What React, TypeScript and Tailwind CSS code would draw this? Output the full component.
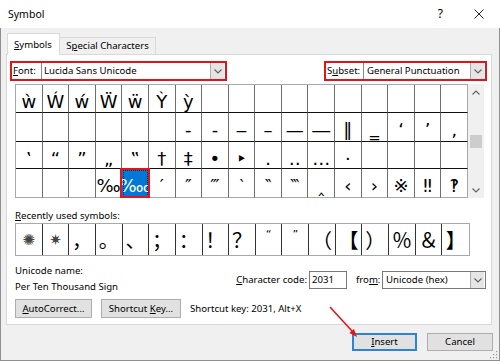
import React from "react";

const GRID: string[][] = [
  ["ẁ", "Ẃ", "ẃ", "Ẅ", "ẅ", "Ỳ", "ỳ", "", "", "", "", "", "", "", "", "", ""],
  ["", "", "", "", "", "", "‐", "‑", "‒", "–", "—", "―", "‖", "‗", "‘", "’", "‚"],
  ["‛", "“", "”", "„", "‟", "†", "‡", "•", "‣", "․", "‥", "…", "‧", "", "", "", ""],
  ["", "", "", "‰", "‱", "′", "″", "‴", "‵", "‶", "‷", "‸", "‹", "›", "※", "‼", "‽"],
];

// row heights taken from the screenshot, written out so tailwind picks them up
const ROW_H = ["h-[28px]", "h-[29px]", "h-[27px]", "h-[29px]"];

const RECENT = ["✺", "✷", "，", "。", "、", "；", "：", "！", "？", "“", "”", "（", "【", "）", "％", "＆", "】"];

function recentFont(i: number) {
  if (i < 2) return "font-['DejaVu_Sans',sans-serif] text-[15px] text-[#444]";
  if (i === 9 || i === 10) return "font-['DejaVu_Sans',sans-serif] text-[11px] leading-none pb-[10px]";
  return "font-['Noto_Sans_CJK_SC',sans-serif] text-[20px] leading-none";
}

function Chevron({ up = false }: { up?: boolean }) {
  return (
    <svg width="8" height="5" viewBox="0 0 8 5">
      <path
        d={up ? "M0.5 4.5 L4 1 L7.5 4.5" : "M0.5 0.5 L4 4 L7.5 0.5"}
        stroke="#606060"
        strokeWidth="1.1"
        fill="none"
      />
    </svg>
  );
}

function DropButton() {
  return (
    <div className="w-[14px] h-full mr-[1px] bg-[#e5e5e5] border-l border-[#adadad] flex items-center justify-center">
      <Chevron />
    </div>
  );
}

function Btn({ children, className = "" }: { children: React.ReactNode; className?: string }) {
  return (
    <div
      className={
        "h-[19px] bg-[#e1e1e1] border border-[#adadad] flex items-center justify-center " + className
      }
    >
      {children}
    </div>
  );
}

export default function App() {
  return (
    <div className="relative w-[500px] h-[361px] flex flex-col bg-white text-black font-['Noto_Sans',sans-serif] text-[9.6px] leading-[12px] overflow-hidden">
      {/* title bar */}
      <div className="h-[28px] flex items-center pl-[8px] bg-white shrink-0">
        <span className="text-[10.5px]">Symbol</span>
        <div className="ml-auto flex items-center">
          <span className="text-[12px] leading-none">?</span>
          <svg width="10" height="10" viewBox="0 0 10 10" className="ml-[31px] mr-[16px]">
            <path d="M0.5 0.5 L9.5 9.5 M9.5 0.5 L0.5 9.5" stroke="#222" strokeWidth="1" />
          </svg>
        </div>
      </div>

      {/* body */}
      <div className="flex-1 bg-[#f0f0f0] border-l border-r border-b border-[#8f8f8f] px-[5px] pt-[5px] flex flex-col">
        {/* tabs */}
        <div className="flex items-end h-[22px] -mb-px relative z-10">
          <div className="ml-[1px] w-[53px] h-[22px] bg-white border border-b-0 border-[#d9d9d9] pl-[6px] flex items-center">
            <span>
              <span className="underline">S</span>ymbols
            </span>
          </div>
          <div className="w-[96px] h-[18px] bg-[#f0f0f0] border border-l-0 border-[#d9d9d9] flex items-center justify-center">
            <span>
              S<span className="underline">p</span>ecial Characters
            </span>
          </div>
        </div>

        {/* tab panel */}
        <div className="w-[486px] h-[271px] bg-white border border-[#d9d9d9] flex flex-col">
          {/* font / subset */}
          <div className="mt-[6px] h-[20px] flex">
            <div className="ml-[3px] w-[217px] h-[20px] border-2 border-[#e3131b] flex items-center">
              <span className="w-[29px] pl-[1px]">
                <span className="underline">F</span>ont:
              </span>
              <div className="flex-1 h-full border-l border-[#8a8a8a] flex items-center">
                <span className="pl-[2px] flex-1">Lucida Sans Unicode</span>
                <DropButton />
              </div>
            </div>
            <div className="ml-auto mr-[4px] w-[163px] h-[20px] border-2 border-[#e3131b] flex items-center">
              <span className="w-[37px] pl-[1px]">
                S<span className="underline">u</span>bset:
              </span>
              <div className="flex-1 h-full border-l border-[#8a8a8a] flex items-center">
                <span className="pl-[3px] flex-1">General Punctuation</span>
                <DropButton />
              </div>
            </div>
          </div>

          {/* symbol grid + scrollbar */}
          <div className="mt-[3px] ml-[8px] flex">
            <div className="w-[453px] grid grid-cols-[repeat(17,minmax(0,1fr))] border-t border-l border-[#a8a8a8] font-['DejaVu_Sans',sans-serif] text-[18px]">
              {GRID.map((row, r) =>
                row.map((ch, c) => {
                  const selected = r === 3 && c === 4;
                  return (
                    <div
                      key={r + "-" + c}
                      className={
                        ROW_H[r] +
                        " relative flex justify-center pt-[5px] leading-[23px] border-r border-b " +
                        (c === 16 ? "border-r-[#a8a8a8] " : "border-r-[#6e6e6e] ") +
                        (r === 3 ? "border-b-[#a8a8a8] " : "border-b-[#111] ") +
                        (selected
                          ? "bg-[#0078d7] text-white outline-1 outline-dotted outline-[#222] -outline-offset-2"
                          : "")
                      }
                    >
                      <span className="whitespace-nowrap">{ch}</span>
                      {selected && (
                        <span className="absolute z-10 -left-[2px] -right-[2px] -top-[1px] -bottom-[1px] border-2 border-[#e3131b]" />
                      )}
                    </div>
                  );
                })
              )}
            </div>
            <div className="w-[16px] h-[114px] bg-[#f0f0f0] flex flex-col items-center">
              <div className="h-[16px] flex items-center">
                <Chevron up />
              </div>
              <div className="h-[35px]" />
              <div className="w-[12px] h-[13px] bg-[#cdcdcd]" />
              <div className="flex-1" />
              <div className="h-[16px] flex items-center">
                <Chevron />
              </div>
            </div>
          </div>

          {/* recently used */}
          <div className="mt-[12px] ml-[8px] h-[12px]">
            <span className="underline">R</span>ecently used symbols:
          </div>
          <div className="mt-[1px] ml-[8px] w-[455px] h-[33px] border border-[#a8a8a8] grid grid-cols-[repeat(17,minmax(0,1fr))]">
            {RECENT.map((ch, i) => (
              <div
                key={i}
                className={
                  "flex items-center justify-center " + (i < 16 ? "border-r border-[#333] " : "") + recentFont(i)
                }
              >
                {ch}
              </div>
            ))}
          </div>

          {/* unicode name / character code */}
          <div className="mt-[9px] flex">
            <div className="ml-[8px] flex flex-col">
              <span className="h-[12px]">Unicode name:</span>
              <span className="mt-[4px] h-[12px]">Per Ten Thousand Sign</span>
            </div>
            <div className="ml-auto mr-[5px] mt-[6px] h-[18px] flex items-center">
              <span>
                <span className="underline">C</span>haracter code:
              </span>
              <div className="ml-[2px] w-[38px] h-[18px] border border-[#7a7a7a] flex items-center pl-[2px]">
                2031
              </div>
              <span className="ml-[9px] w-[26px]">
                fro<span className="underline">m</span>:
              </span>
              <div className="w-[104px] h-[18px] border border-[#7a7a7a] flex items-center">
                <span className="pl-[3px] flex-1">Unicode (hex)</span>
                <DropButton />
              </div>
            </div>
          </div>

          {/* autocorrect / shortcut key */}
          <div className="mt-[6px] ml-[8px] flex items-center">
            <Btn className="w-[77px]">
              <span>
                <span className="underline">A</span>utoCorrect...
              </span>
            </Btn>
            <Btn className="ml-[9px] w-[80px]">
              <span>
                Shortcut <span className="underline">K</span>ey...
              </span>
            </Btn>
            <span className="ml-[9px]">Shortcut key: 2031, Alt+X</span>
          </div>
        </div>

        {/* dialog buttons */}
        <div className="mt-[8px] flex justify-end mr-[1px]">
          <div className="w-[65px] h-[18px] bg-[#e1e1e1] border-2 border-[#2a85d2] flex items-center justify-center">
            <span>
              <span className="underline">I</span>nsert
            </span>
          </div>
          <div className="ml-[10px] w-[66px] h-[18px] bg-[#e1e1e1] border border-[#adadad] flex items-center justify-center">
            Cancel
          </div>
        </div>
      </div>

      {/* red annotation arrow */}
      <svg className="absolute left-0 top-0 pointer-events-none" width="500" height="361">
        <line x1="330" y1="307" x2="352" y2="331" stroke="#e3131b" strokeWidth="1.6" />
        <polygon points="357,337 349.4,333.1 353.9,329.1" fill="#e3131b" />
      </svg>

      {/* resize grip */}
      <svg className="absolute right-[2px] bottom-[2px]" width="8" height="8" viewBox="0 0 8 8">
        <rect x="6" y="0" width="1.2" height="1.2" fill="#9a9a9a" />
        <rect x="3" y="3" width="1.2" height="1.2" fill="#9a9a9a" />
        <rect x="6" y="3" width="1.2" height="1.2" fill="#9a9a9a" />
        <rect x="0" y="6" width="1.2" height="1.2" fill="#9a9a9a" />
        <rect x="3" y="6" width="1.2" height="1.2" fill="#9a9a9a" />
        <rect x="6" y="6" width="1.2" height="1.2" fill="#9a9a9a" />
      </svg>
    </div>
  );
}
